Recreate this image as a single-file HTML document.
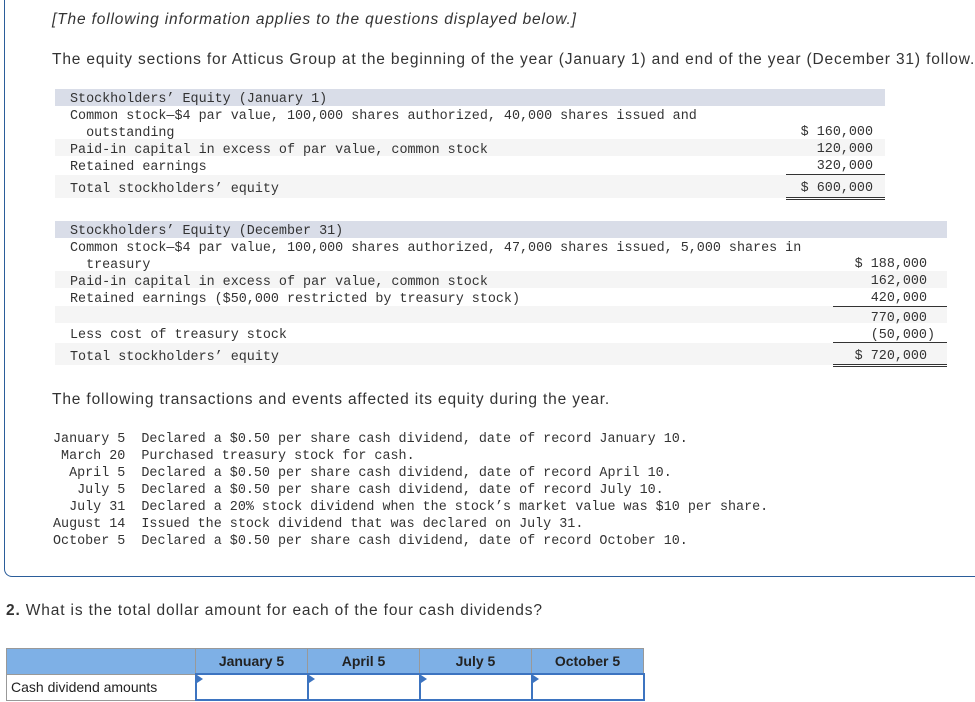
<!DOCTYPE html>
<html><head><meta charset="utf-8"><style>
body{margin:0;width:975px;height:702px;background:#fff;position:relative;overflow:hidden;font-family:"Liberation Sans",sans-serif;color:#333}
.card{position:absolute;left:4px;top:-20px;width:1000px;height:596px;border:1.5px solid #2b5d9a;border-radius:0 0 0 8px;border-top:none;border-right:none}
.t{position:absolute;font-size:15.5px;white-space:nowrap;letter-spacing:0.85px}
.m{position:absolute;font-family:"Liberation Mono",monospace;font-size:13.4px;white-space:pre;color:#333;line-height:17px}
.bar{position:absolute;background:#f5f5f5}
.hd{position:absolute;background:#d9dde8}
.ln{position:absolute;border-top:1px solid #333}
.r{text-align:right}
table{position:absolute;left:6px;top:648px;border-collapse:collapse;font-size:14px}
td{border:1px solid #999;padding:0;height:24px}
.h td{background:#7eb0e6;text-align:center;color:#222;font-weight:bold}
.inp{border:2px solid #3d74c0;position:relative}
.inp:before{content:"";position:absolute;left:0;top:0;border-left:6px solid #3d74c0;border-top:4px solid transparent;border-bottom:4px solid transparent}
</style></head><body>
<div class="card"></div>
<div class="t" style="left:52px;top:11px;font-style:italic">[The following information applies to the questions displayed below.]</div>
<div class="t" style="left:52px;top:51px">The equity sections for Atticus Group at the beginning of the year (January 1) and end of the year (December 31) follow.</div>

<div class="hd" style="left:55px;top:89px;width:830px;height:17px"></div>
<div class="bar" style="left:55px;top:139px;width:830px;height:17px"></div>
<div class="bar" style="left:55px;top:175px;width:830px;height:23px"></div>
<div class="m" style="left:70px;top:91px">Stockholders’ Equity (January 1)
Common stock—$4 par value, 100,000 shares authorized, 40,000 shares issued and
  outstanding
Paid-in capital in excess of par value, common stock
Retained earnings</div>
<div class="m" style="left:70px;top:181px">Total stockholders’ equity</div>
<div class="m r" style="left:760px;top:124px;width:113px">$ 160,000
120,000
320,000</div>
<div class="ln" style="left:786px;top:174px;width:99px"></div>
<div class="m r" style="left:760px;top:180px;width:113px">$ 600,000</div>
<div class="ln" style="left:786px;top:197px;width:99px;border-top:3px double #333"></div>

<div class="hd" style="left:55px;top:221px;width:892px;height:17px"></div>
<div class="bar" style="left:55px;top:271px;width:892px;height:17px"></div>
<div class="bar" style="left:55px;top:306px;width:892px;height:17px"></div>
<div class="bar" style="left:55px;top:343px;width:892px;height:22px"></div>
<div class="m" style="left:70px;top:223px">Stockholders’ Equity (December 31)
Common stock—$4 par value, 100,000 shares authorized, 47,000 shares issued, 5,000 shares in
  treasury
Paid-in capital in excess of par value, common stock
Retained earnings ($50,000 restricted by treasury stock)</div>
<div class="m" style="left:70px;top:327px">Less cost of treasury stock</div>
<div class="m" style="left:70px;top:349px">Total stockholders’ equity</div>
<div class="m r" style="left:800px;top:256px;width:127px">$ 188,000
162,000
420,000</div>
<div class="ln" style="left:833px;top:306px;width:114px"></div>
<div class="m r" style="left:800px;top:310px;width:135px">770,000 
(50,000)</div>
<div class="ln" style="left:833px;top:342px;width:114px"></div>
<div class="m r" style="left:800px;top:348px;width:127px">$ 720,000</div>
<div class="ln" style="left:833px;top:364px;width:114px;border-top:3px double #333"></div>

<div class="t" style="left:52px;top:391px">The following transactions and events affected its equity during the year.</div>
<div class="m" style="left:53px;top:431px">January 5  Declared a $0.50 per share cash dividend, date of record January 10.
 March 20  Purchased treasury stock for cash.
  April 5  Declared a $0.50 per share cash dividend, date of record April 10.
   July 5  Declared a $0.50 per share cash dividend, date of record July 10.
  July 31  Declared a 20% stock dividend when the stock’s market value was $10 per share.
August 14  Issued the stock dividend that was declared on July 31.
October 5  Declared a $0.50 per share cash dividend, date of record October 10.</div>

<div class="t" style="left:6px;top:602px"><b>2.</b> What is the total dollar amount for each of the four cash dividends?</div>
<table>
<tr class="h"><td style="width:188px"></td><td style="width:111px">January 5</td><td style="width:111px">April 5</td><td style="width:111px">July 5</td><td style="width:111px">October 5</td></tr>
<tr><td style="padding-left:4px;color:#222">Cash dividend amounts</td><td class="inp"></td><td class="inp"></td><td class="inp"></td><td class="inp"></td></tr>
</table>
</body></html>
